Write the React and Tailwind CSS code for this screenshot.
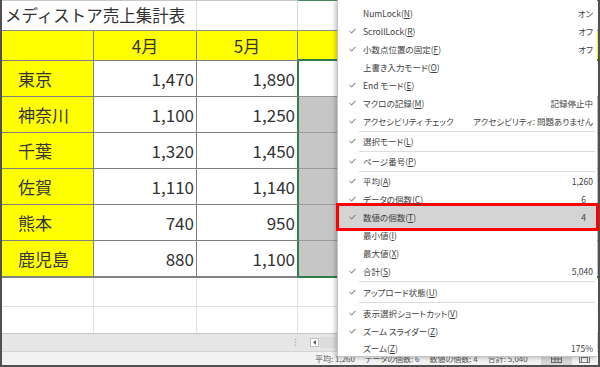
import React from "react";

const Check = () => (
  <svg width="7" height="6" viewBox="0 0 7 6" className="block">
    <path d="M0.6 3.1 L2.6 5 L6.4 0.9" stroke="#5a5a5a" strokeWidth="1" fill="none" />
  </svg>
);

const items = [
  { label: "NumLock", k: "N", value: "オン" },
  { label: "ScrollLock", k: "R", value: "オフ", check: true },
  { label: "小数点位置の固定", k: "F", value: "オフ", check: true },
  { label: "上書き入力モード", k: "O" },
  { label: "End モード", k: "E", check: true },
  { label: "マクロの記録", k: "M", value: "記録停止中", check: true },
  { label: "アクセシビリティ チェック", value: "アクセシビリティ: 問題ありません", check: true },
  { sep: 2 },
  { label: "選択モード", k: "L", check: true },
  { sep: 2 },
  { label: "ページ番号", k: "P", check: true },
  { sep: 2 },
  { label: "平均", k: "A", value: "1,260", check: true },
  { label: "データの個数", k: "C", value: "6", check: true, vpad: true },
  { label: "数値の個数", k: "T", value: "4", check: true, vpad: true },
  { label: "最小値", k: "I" },
  { label: "最大値", k: "X" },
  { label: "合計", k: "S", value: "5,040", check: true },
  { sep: 3 },
  { label: "アップロード状態", k: "U", check: true },
  { sep: 3 },
  { label: "表示選択ショートカット", k: "V", check: true },
  { label: "ズーム スライダー", k: "Z", check: true },
  { label: "ズーム", k: "Z", value: "175%" },
];

const rows = [
  ["東京", "1,470", "1,890"],
  ["神奈川", "1,100", "1,250"],
  ["千葉", "1,320", "1,450"],
  ["佐賀", "1,110", "1,140"],
  ["熊本", "740", "950"],
  ["鹿児島", "880", "1,100"],
];

function Menu() {
  return (
    <div className="absolute left-[337px] top-0 w-[260px] h-[357px] bg-white border-l border-b border-[#c4c4c4] shadow-[-2px_1px_4px_rgba(0,0,0,0.22)] font-['Noto_Sans_CJK_JP',sans-serif] [font-feature-settings:'palt'] text-[8.5px] text-[#3f3f3f]">
      <div className="absolute left-[-2px] top-[203px] w-[263px] h-[28px] border-[3px] border-[#ff0000] bg-[#d4d4d4] z-0" />
      <div className="relative z-10 flex flex-col pt-[4px]">
        {items.map((it, i) =>
          it.sep ? (
            <div key={i} className={`flex items-center ${it.sep === 3 ? "h-[3px]" : "h-[2px]"}`}>
              <div className="ml-[21px] mr-[2px] h-px flex-1 bg-[#dcdcdc]" />
            </div>
          ) : (
            <div key={i} className={`flex items-center pr-[4px] leading-none ${i === items.length - 1 ? "h-[17px]" : "h-[18px]"}`}>
              <div className="w-[25px] pl-[11px]">{it.check ? <Check /> : null}</div>
              <div className="flex-1 whitespace-nowrap">
                {it.label}
                {it.k ? (
                  <>
                    (<span className="underline underline-offset-[1px]">{it.k}</span>)
                  </>
                ) : null}
              </div>
              {it.value ? (
                <div className={`whitespace-nowrap ${it.vpad ? "pr-[7px]" : ""}`}>{it.value}</div>
              ) : null}
            </div>
          )
        )}
      </div>
    </div>
  );
}

function Sheet() {
  return (
    <div className="flex h-full flex-col border-l-2 border-r-2 border-b-2 border-[#505050] bg-white font-['Noto_Sans_CJK_JP',sans-serif] text-[#333]">
      <div className="flex h-px flex-none">
        <div className="w-[296px] bg-[#c8c8c8]" />
        <div className="flex-1 bg-[#3f8c5c]" />
      </div>
      {/* title row */}
      <div className="flex h-[30px] flex-none">
        <div className="w-[195px] flex items-center pl-[3px] border-r border-b border-r-[#dcdcdc] border-b-[#8a8a8a] text-[16.5px] whitespace-nowrap leading-none">
          メディストア売上集計表
        </div>
        <div className="w-[101px] border-r border-b border-r-[#dcdcdc] border-b-[#8a8a8a]" />
        <div className="flex-1 border-b border-[#8a8a8a]" />
      </div>
      {/* header row */}
      <div className="flex h-[30px] flex-none text-[17px] leading-none">
        <div className="w-[92px] bg-[#ffff00] border-r border-b border-[#808080]" />
        <div className="w-[103px] bg-[#ffff00] border-r border-b border-[#808080] flex items-center justify-center">4月</div>
        <div className="w-[101px] bg-[#ffff00] border-r border-b border-[#808080] flex items-center justify-center">5月</div>
        <div className="flex-1 bg-[#ffff00] border-b-2 border-[#2f7d4d]" />
      </div>
      {rows.map((r, i) => {
        const last = i === rows.length - 1;
        return (
          <div key={i} className={`flex flex-none text-[17px] leading-none ${last ? "h-[37px]" : "h-[36px]"}`}>
            <div className={`w-[92px] bg-[#ffff00] border-r border-[#808080] flex items-center pl-[16px] ${last ? "border-b-2" : "border-b"}`}>
              {r[0]}
            </div>
            <div className={`w-[103px] border-r border-[#808080] flex items-center justify-end pr-[2px] ${last ? "border-b-2" : "border-b"}`}>
              {r[1]}
            </div>
            <div className={`w-[102px] border-r-2 border-r-[#2f7d4d] border-b-[#808080] flex items-center justify-end pr-[2px] ${last ? "border-b-2" : "border-b"}`}>
              {r[2]}
            </div>
            <div
              className={`flex-1 ${i === 0 ? "bg-white" : "bg-[#c6c6c6]"} ${
                last ? "border-b-2 border-[#2f7d4d]" : "border-b border-[#9a9a9a]"
              }`}
            />
          </div>
        );
      })}
      {/* empty rows */}
      <div className="flex h-[29px] flex-none">
        <div className="w-[92px] border-r border-b border-[#e1e1e1]" />
        <div className="w-[103px] border-r border-b border-[#e1e1e1]" />
        <div className="w-[101px] border-r border-b border-[#e1e1e1]" />
        <div className="flex-1 border-b border-[#e1e1e1]" />
      </div>
      <div className="flex h-[27px] flex-none">
        <div className="w-[92px] border-r border-b border-r-[#e1e1e1] border-b-[#c4c4c4]" />
        <div className="w-[103px] border-r border-b border-r-[#e1e1e1] border-b-[#c4c4c4]" />
        <div className="w-[101px] border-r border-b border-r-[#e1e1e1] border-b-[#c4c4c4]" />
        <div className="flex-1 border-b border-[#c4c4c4]" />
      </div>
      {/* scroll area */}
      <div className="flex h-[17px] flex-none items-center bg-[#e6e6e6]">
        <div className="w-[289px]" />
        <div className="text-[9px] leading-none text-[#9a9a9a] font-['DejaVu_Sans',sans-serif]">⋮</div>
        <div className="w-[10px]" />
        <div className="flex h-[9px] w-[9px] items-center justify-center border border-[#bdbdbd] bg-white">
          <svg width="3" height="5" viewBox="0 0 3 5">
            <path d="M3 0 L0 2.5 L3 5 Z" fill="#606060" />
          </svg>
        </div>
        <div className="ml-px h-[11px] flex-1 bg-[#dcdcdc]" />
      </div>
      {/* status bar */}
      <div className="flex h-[14px] flex-none items-end pb-[2px] bg-[#f2f2f2] border-t border-[#d4d4d4] text-[8px] leading-none text-[#555] [font-feature-settings:'palt'] whitespace-nowrap">
        <div className="w-[313px] flex-none" />
        <div className="flex-none">平均: 1,260</div>
        <div className="ml-[10px] flex-none">データの個数: 6</div>
        <div className="ml-[10px] flex-none">数値の個数: 4</div>
        <div className="ml-[10px] flex-none">合計: 5,040</div>
        <div className="flex-1" />
        <div className="flex h-[13px] w-[31px] flex-none items-center justify-center bg-[#d6d6d6] -mb-[2px]">
          <svg width="11" height="8" viewBox="0 0 11 8">
            <rect x="0.5" y="0.5" width="10" height="7" fill="none" stroke="#666" />
            <path d="M0.5 4 H10.5 M4 0.5 V7.5 M7 0.5 V7.5" stroke="#666" />
          </svg>
        </div>
        <div className="w-[7px] flex-none" />
        <svg width="11" height="8" viewBox="0 0 11 8" className="flex-none">
          <rect x="0.5" y="0.5" width="10" height="7" fill="none" stroke="#777" />
          <rect x="2.5" y="2.5" width="6" height="5" fill="none" stroke="#777" />
        </svg>
        <div className="w-[8px] flex-none" />
      </div>
    </div>
  );
}

export default function App() {
  return (
    <div className="relative h-[367px] w-[600px] overflow-hidden bg-white">
      <Sheet />
      <Menu />
    </div>
  );
}
